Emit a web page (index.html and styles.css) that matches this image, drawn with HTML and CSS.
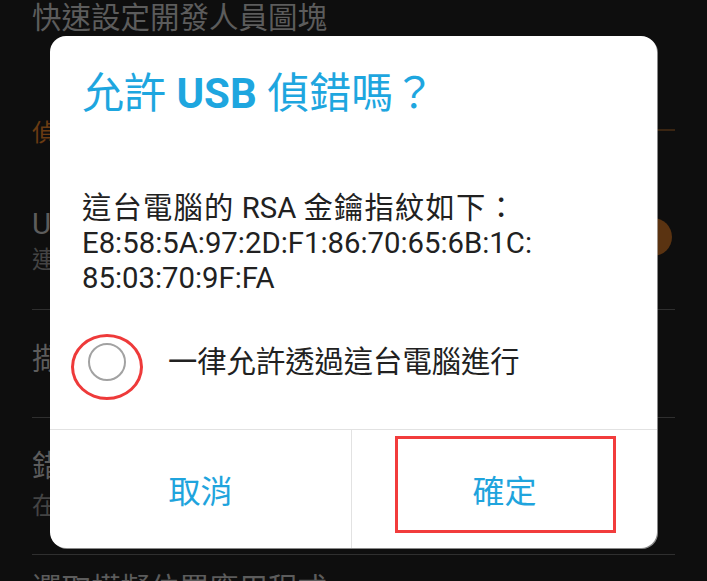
FILE: index.html
```html
<!DOCTYPE html>
<html lang="zh-Hant">
<head>
<meta charset="utf-8">
<title>允許 USB 偵錯嗎？</title>
<link rel="stylesheet" href="styles.css">
</head>
<body>
<div class="screen">
  <div class="list">
    <div class="pref pref-top"><div class="pref-title">快速設定開發人員圖塊</div></div>
    <div class="category"><span class="category-title">偵錯</span><span class="category-line"></span></div>
    <div class="pref pref-usb">
      <div class="pref-text">
        <div class="pref-title">USB 偵錯</div>
        <div class="pref-summary">連接 USB 時啟用偵錯模式</div>
      </div>
      <div class="switch"><span class="switch-track"></span><span class="switch-thumb"></span></div>
    </div>
    <div class="pref pref-bug"><div class="pref-title">擷取錯誤報告</div></div>
    <div class="pref pref-shortcut">
      <div class="pref-text">
        <div class="pref-title">錯誤報告捷徑</div>
        <div class="pref-summary">在電源選單中顯示取得錯誤報告的按鈕</div>
      </div>
    </div>
    <div class="pref pref-mock"><div class="pref-title">選取模擬位置應用程式</div></div>
  </div>

  <div class="dialog">
    <div class="dialog-title">允許 <b>USB</b> 偵錯嗎？</div>
    <div class="dialog-message"><span class="cjk">這台電腦的</span> RSA <span class="cjk">金鑰指紋如下：</span><br>E8:58:5A:97:2D:F1:86:70:65:6B:1C:<br>85:03:70:9F:FA</div>
    <div class="dialog-check">
      <span class="radio"></span>
      <span class="check-label">一律允許透過這台電腦進行</span>
    </div>
    <div class="dialog-buttons">
      <div class="btn btn-cancel">取消</div>
      <div class="btn btn-ok">確定</div>
    </div>
  </div>

  <div class="mark mark-ellipse"></div>
  <div class="mark mark-rect"></div>
</div>
</body>
</html>
```

FILE: styles.css
```css
* { box-sizing: border-box; }

html, body {
  margin: 0;
  padding: 0;
  background: #0e0e0e;
}

body {
  font-family: "Roboto", "Noto Sans CJK TC", sans-serif;
}

.screen {
  position: relative;
  width: 707px;
  height: 581px;
  overflow: hidden;
  background: #0e0e0e;
}

/* ---------- background settings list (dimmed) ---------- */
.list {
  padding: 0 32px;
}

.pref {
  display: flex;
  align-items: flex-start;
}

.pref-text {
  flex: 1;
  display: flex;
  flex-direction: column;
}

.pref-title {
  font-size: 29.5px;
  line-height: 36px;
  color: #5c5c5c;
  white-space: nowrap;
}

.pref-summary {
  font-size: 24px;
  line-height: 32px;
  color: #444444;
  margin-top: 2px;
  white-space: nowrap;
}

.pref-top {
  height: 36px;
}

.category {
  margin-top: 74px;
  height: 40px;
  display: flex;
  align-items: center;
  gap: 12px;
}

.category-title {
  font-size: 24px;
  color: #6a3b12;
}

.category-line {
  flex: 1;
  height: 2px;
  background: #3a2512;
}

.pref-usb {
  padding: 56px 0 33px;
  border-bottom: 1px solid #2f2f2f;
}

.switch {
  position: relative;
  width: 70px;
  height: 38px;
  margin-top: 12px;
  margin-right: 3px;
}

.switch-track {
  position: absolute;
  left: 8px;
  right: 8px;
  top: 9px;
  height: 20px;
  border-radius: 10px;
  background: #3b230c;
}

.switch-thumb {
  position: absolute;
  right: 0;
  top: 0;
  width: 38px;
  height: 38px;
  border-radius: 50%;
  background: #5a3311;
}

.pref-bug {
  padding: 31px 0 40px;
  border-bottom: 1px solid #2f2f2f;
}

.pref-shortcut {
  padding: 30px 0 32px;
  border-bottom: 1px solid #2f2f2f;
}

.pref-shortcut .pref-summary {
  margin-top: 6px;
}

.pref-mock {
  padding-top: 16px;
}

/* ---------- dialog ---------- */
.dialog {
  position: absolute;
  left: 50px;
  top: 36px;
  width: 607px;
  height: 512px;
  background: #ffffff;
  border-radius: 16px;
  box-shadow: 1px 1px 0 rgba(190, 190, 190, 0.7);
  display: flex;
  flex-direction: column;
  overflow: hidden;
}

.dialog-title {
  padding: 33px 32px 0;
  font-size: 42px;
  line-height: 50px;
  font-weight: 400;
  color: #1ea6df;
  white-space: nowrap;
}

.dialog-title b {
  font-weight: 700;
}

.dialog-message {
  margin-top: 72px;
  padding: 0 32px;
  font-size: 29.3px;
  line-height: 35px;
  color: #212121;
}

.dialog-message .cjk {
  letter-spacing: 1.2px;
}

.dialog-check {
  margin-top: 38px;
  height: 56px;
  padding: 0 32px;
  display: flex;
  align-items: center;
}

.radio {
  width: 38px;
  height: 38px;
  margin-left: 6px;
  border: 2px solid #a2a2a2;
  border-radius: 50%;
  flex: none;
}

.check-label {
  margin-left: 42px;
  font-size: 29.3px;
  line-height: 36px;
  color: #212121;
  white-space: nowrap;
}

.dialog-buttons {
  margin-top: auto;
  height: 119px;
  border-top: 1px solid #e2e2e2;
  display: grid;
  grid-template-columns: 302px 1fr;
}

.btn {
  display: flex;
  align-items: center;
  justify-content: center;
  font-size: 32px;
  color: #1fa4dd;
}

.btn-cancel {
  border-right: 1px solid #e2e2e2;
}

/* ---------- red annotations ---------- */
.mark {
  position: absolute;
  pointer-events: none;
}

.mark-ellipse {
  left: 71px;
  top: 334px;
  width: 72px;
  height: 66px;
  border: 3px solid #ee3a3a;
  border-radius: 50%;
}

.mark-rect {
  left: 395px;
  top: 436px;
  width: 221px;
  height: 97px;
  border: 3px solid #f23c3c;
}
```
